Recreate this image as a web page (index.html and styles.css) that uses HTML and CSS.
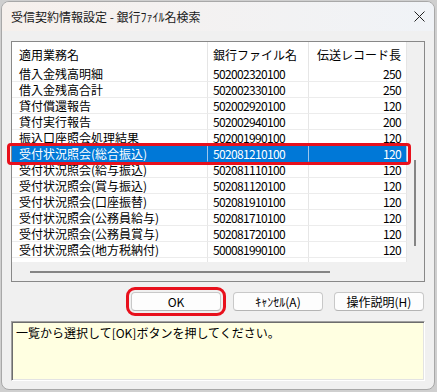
FILE: index.html
```html
<!DOCTYPE html>
<html lang="ja">

<head>
    <meta charset="UTF-8">
    <title>受信契約情報設定 - 銀行ﾌｧｲﾙ名検索</title>
    <link rel="stylesheet" href="styles.css">
</head>

<body>

    <div class="window">
        <div class="titlebar">
            <span class="title">受信契約情報設定 - 銀行ﾌｧｲﾙ名検索</span>
            <svg class="close" width="11" height="11" viewBox="0 0 11 11">
                <path d="M0.5 0.5 L10.5 10.5 M10.5 0.5 L0.5 10.5" stroke="#222" stroke-width="1" fill="none" />
            </svg>
        </div>

        <div class="content">
            <div class="listbox">
                <div class="list-main">
                    <div class="grid">
                        <div class="row head">
                            <div class="cell">適用業務名</div>
                            <div class="cell">銀行ファイル名</div>
                            <div class="cell right">伝送レコード長</div>
                        </div>
                        <div class="row">
                            <div class="cell">借入金残高明細</div>
                            <div class="cell num">502002320100</div>
                            <div class="cell num right">250</div>
                        </div>
                        <div class="row">
                            <div class="cell">借入金残高合計</div>
                            <div class="cell num">502002330100</div>
                            <div class="cell num right">250</div>
                        </div>
                        <div class="row">
                            <div class="cell">貸付償還報告</div>
                            <div class="cell num">502002920100</div>
                            <div class="cell num right">120</div>
                        </div>
                        <div class="row">
                            <div class="cell">貸付実行報告</div>
                            <div class="cell num">502002940100</div>
                            <div class="cell num right">200</div>
                        </div>
                        <div class="row">
                            <div class="cell">振込口座照会処理結果</div>
                            <div class="cell num">502001990100</div>
                            <div class="cell num right">120</div>
                        </div>
                        <div class="row selected">
                            <div class="cell">受付状況照会(総合振込)</div>
                            <div class="cell num">502081210100</div>
                            <div class="cell num right">120</div>
                        </div>
                        <div class="row">
                            <div class="cell">受付状況照会(給与振込)</div>
                            <div class="cell num">502081110100</div>
                            <div class="cell num right">120</div>
                        </div>
                        <div class="row">
                            <div class="cell">受付状況照会(賞与振込)</div>
                            <div class="cell num">502081120100</div>
                            <div class="cell num right">120</div>
                        </div>
                        <div class="row">
                            <div class="cell">受付状況照会(口座振替)</div>
                            <div class="cell num">502081910100</div>
                            <div class="cell num right">120</div>
                        </div>
                        <div class="row">
                            <div class="cell">受付状況照会(公務員給与)</div>
                            <div class="cell num">502081710100</div>
                            <div class="cell num right">120</div>
                        </div>
                        <div class="row">
                            <div class="cell">受付状況照会(公務員賞与)</div>
                            <div class="cell num">502081720100</div>
                            <div class="cell num right">120</div>
                        </div>
                        <div class="row">
                            <div class="cell">受付状況照会(地方税納付)</div>
                            <div class="cell num">500081990100</div>
                            <div class="cell num right">120</div>
                        </div>
                        <div class="row">
                            <div class="cell"></div>
                            <div class="cell"></div>
                            <div class="cell"></div>
                        </div>
                    </div>
                    <div class="vscroll">
                        <div class="vthumb"></div>
                    </div>
                </div>
                <div class="hscroll">
                    <div class="hthumb"></div>
                </div>
            </div>

            <div class="buttons">
                <button class="btn marked">OK</button>
                <button class="btn">ｷｬﾝｾﾙ(A)</button>
                <button class="btn">操作説明(H)</button>
            </div>

            <div class="message">一覧から選択して[OK]ボタンを押してください。</div>
        </div>

        <!-- red annotation around the selected row -->
        <div class="row-mark"></div>
    </div>

</body>

</html>
```

FILE: styles.css
```css
/* dialog window */
body {
    margin: 0;
    background-color: #cfcfcf;
    font-family: "Noto Sans CJK JP", "Noto Sans", sans-serif;
    font-size: 12px;
    color: #000;
}

.window {
    position: relative;
    margin: 1px;
    width: 432px;
    height: 387px;
    border: 1px solid #a8a8a8;
    border-radius: 8px;
    overflow: hidden;
    background-color: #f0f0f0;
}

.titlebar {
    height: 29px;
    display: flex;
    align-items: center;
    justify-content: space-between;
    padding: 0 9px;
    background: linear-gradient(90deg, #f6f0ec, #f0f3f7);
}

.title {
    color: #1a1a1a;
    line-height: 16px;
}

.close {
    display: block;
}

.content {
    padding: 10px 9px 0;
}

/* list box */
.listbox {
    height: 241px;
    box-sizing: border-box;
    border: 1px solid #888;
    display: flex;
    flex-direction: column;
}

.list-main {
    height: 220px;
    display: flex;
}

.grid {
    width: 395px;
    overflow: hidden;
    background-color: #fff;
}

.row {
    display: grid;
    grid-template-columns: 196px 101px 98px;
    height: 16px;
}

.cell {
    box-sizing: border-box;
    height: 16px;
    line-height: 15px;
    padding: 0 5px;
    border-right: 1px solid #e6e6e6;
    border-bottom: 1px solid #ececec;
    white-space: nowrap;
    overflow: hidden;
}

.cell:first-child {
    padding-left: 7px;
}

.cell.right {
    text-align: right;
}

.cell.num {
    letter-spacing: -0.65px;
}

.row.head {
    height: 24px;
}

.row.head .cell {
    height: 24px;
    line-height: 26px;
    border-bottom: none;
    border-right-color: #e5e5e5;
}

.row.selected {
    background-color: #0078d7;
    color: #fff;
}

.row.selected .cell {
    border-right-color: #9cc6ec;
    border-bottom-color: #0078d7;
}

.vscroll {
    width: 17px;
    background-color: #f0f0f0;
}

.vthumb {
    margin: 118px 0 0 7px;
    width: 2px;
    height: 86px;
    background-color: #858585;
}

.hscroll {
    flex: 1;
    background-color: #f0f0f0;
}

.hthumb {
    margin: 9px 0 0 18px;
    width: 300px;
    height: 2px;
    background-color: #858585;
}

.row-mark {
    position: absolute;
    left: 5px;
    top: 141px;
    width: 404px;
    height: 22px;
    box-sizing: border-box;
    border: 3px solid #e8101c;
    border-radius: 4px;
}

/* buttons */
.buttons {
    display: flex;
    justify-content: flex-end;
    gap: 11px;
    margin-top: 10px;
    padding-right: 1px;
}

.btn {
    width: 90px;
    height: 19px;
    padding: 0;
    border: 1px solid #c8c8c8;
    border-bottom-color: #b4b4b4;
    border-radius: 4px;
    background-color: #fdfdfd;
    font-family: inherit;
    font-size: 12px;
    line-height: 16px;
    color: #000;
}

.btn.marked {
    margin-right: 1px;
    outline: 3px solid #e8101c;
    outline-offset: 2px;
}

/* message area */
.message {
    margin-top: 10px;
    height: 60px;
    box-sizing: border-box;
    padding: 3px 4px;
    border: 1px solid;
    border-color: #a0a0a0 #fff #fff #a0a0a0;
    box-shadow: inset 1px 1px 0 #6d6d6d, inset -1px -1px 0 #e3e3e3;
    background-color: #ffffe1;
    line-height: 16px;
}
```
